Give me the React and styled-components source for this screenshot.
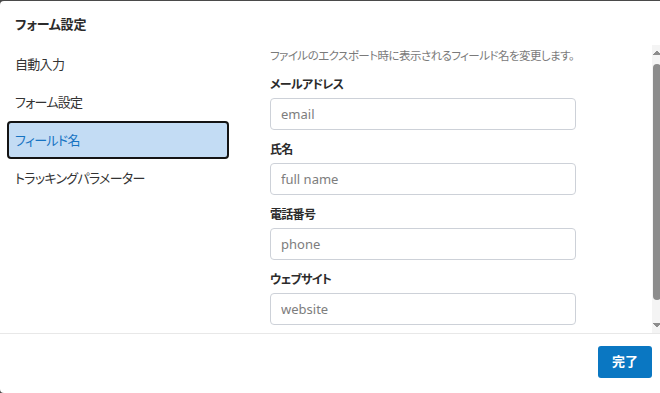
import React from "react";
import styled, { createGlobalStyle } from "styled-components";

const GlobalStyle = createGlobalStyle`
  html, body {
    margin: 0;
    height: 100%;
    overflow: hidden;
    background: #4a4a4a;
  }
  body {
    font-family: "Noto Sans", "Noto Sans CJK JP", sans-serif;
    font-feature-settings: "palt";
    color: #333;
  }
  * { box-sizing: border-box; }
`;

const navItems = ["自動入力", "フォーム設定", "フィールド名", "トラッキングパラメーター"];

const fields = [
  { label: "メールアドレス", placeholder: "email" },
  { label: "氏名", placeholder: "full name" },
  { label: "電話番号", placeholder: "phone" },
  { label: "ウェブサイト", placeholder: "website" },
];

const Dialog = styled.div`
  margin-top: 1px;
  width: 664px;
  height: 392px;
  background: #fff;
  border-radius: 4px;
  display: flex;
  flex-direction: column;
  overflow: hidden;
`;

const Header = styled.div`
  height: 44px;
  flex: none;
  display: flex;
  align-items: center;
  padding-left: 15px;
  font-size: 13px;
  font-weight: 700;
  letter-spacing: -0.2px;
  color: #2b2b2b;
`;

const Body = styled.div`
  height: 288px;
  flex: none;
  display: flex;
`;

const Nav = styled.nav`
  width: 240px;
  flex: none;
  display: flex;
  flex-direction: column;
  padding-left: 7px;
`;

const NavItem = styled.div`
  width: 222px;
  height: 38px;
  display: flex;
  align-items: center;
  padding: 0 6px 1px;
  border: 2px solid ${(p) => (p.$active ? "#141414" : "transparent")};
  border-radius: 4px;
  background: ${(p) => (p.$active ? "#c3dcf4" : "transparent")};
  color: ${(p) => (p.$active ? "#1673c2" : "#333")};
  font-size: 13px;
  letter-spacing: -0.7px;
`;

const Pane = styled.div`
  flex: 1;
  display: flex;
  overflow: hidden;
`;

const Content = styled.div`
  flex: 1;
  padding-left: 30px;
  overflow: hidden;
`;

const Description = styled.p`
  margin: 2px 0 0;
  font-size: 11.5px;
  line-height: 18px;
  letter-spacing: -0.55px;
  color: #7a7a7a;
`;

const Field = styled.div`
  margin-top: 10px;
  width: 306px;
  display: flex;
  flex-direction: column;
  gap: 4px;
`;

const Label = styled.label`
  font-size: 12px;
  line-height: 18px;
  font-weight: 700;
  letter-spacing: -0.7px;
  color: #2b2b2b;
  padding-top: 1px;
`;

const Input = styled.input`
  height: 32px;
  width: 100%;
  border: 1px solid #cdd1d8;
  border-radius: 4px;
  padding: 0 10px;
  font-family: "Noto Sans", "Noto Sans CJK JP", sans-serif;
  font-size: 13px;
  color: #333;
  outline: none;
  &::placeholder {
    color: #7d7d7d;
  }
`;

const Track = styled.div`
  width: 12px;
  flex: none;
  background: #f4f4f4;
  display: flex;
  flex-direction: column;
  align-items: flex-start;
`;

const Arrow = styled.div`
  width: 10px;
  height: 14px;
  flex: none;
  background: conic-gradient(
      from ${(p) => (p.$down ? "-40deg" : "140deg")} at 50% ${(p) => (p.$down ? "100%" : "0")},
      #8c8c8c 80deg,
      transparent 0
    )
    ${(p) => (p.$down ? "1px 4px" : "1px 5px")} / 8px 5px no-repeat;
`;

const Thumb = styled.div`
  width: 8px;
  height: 236px;
  margin: 5px 0 0 1px;
  border-radius: 4px;
  background: #8c8c8c;
`;

const Spacer = styled.div`
  flex: 1;
`;

const Footer = styled.div`
  flex: 1;
  border-top: 1px solid #e8e8e8;
  display: flex;
  justify-content: flex-end;
  align-items: flex-start;
  padding: 12px 12px 0 0;
`;

const DoneButton = styled.button`
  width: 54px;
  height: 32px;
  border: none;
  border-radius: 3px;
  background: #0a77c2;
  color: #fff;
  font-family: "Noto Sans", "Noto Sans CJK JP", sans-serif;
  font-size: 13px;
  font-weight: 700;
  line-height: 28px;
  padding: 0 0 2px;
`;

export default function App() {
  return (
    <>
      <GlobalStyle />
      <Dialog>
        <Header>フォーム設定</Header>
        <Body>
          <Nav>
            {navItems.map((item) => (
              <NavItem key={item} $active={item === "フィールド名"}>
                {item}
              </NavItem>
            ))}
          </Nav>
          <Pane>
            <Content>
              <Description>
                ファイルのエクスポート時に表示されるフィールド名を変更します。
              </Description>
              {fields.map((f) => (
                <Field key={f.label}>
                  <Label>{f.label}</Label>
                  <Input placeholder={f.placeholder} />
                </Field>
              ))}
            </Content>
            <Track>
              <Arrow />
              <Thumb />
              <Spacer />
              <Arrow $down />
            </Track>
          </Pane>
        </Body>
        <Footer>
          <DoneButton>完了</DoneButton>
        </Footer>
      </Dialog>
    </>
  );
}
